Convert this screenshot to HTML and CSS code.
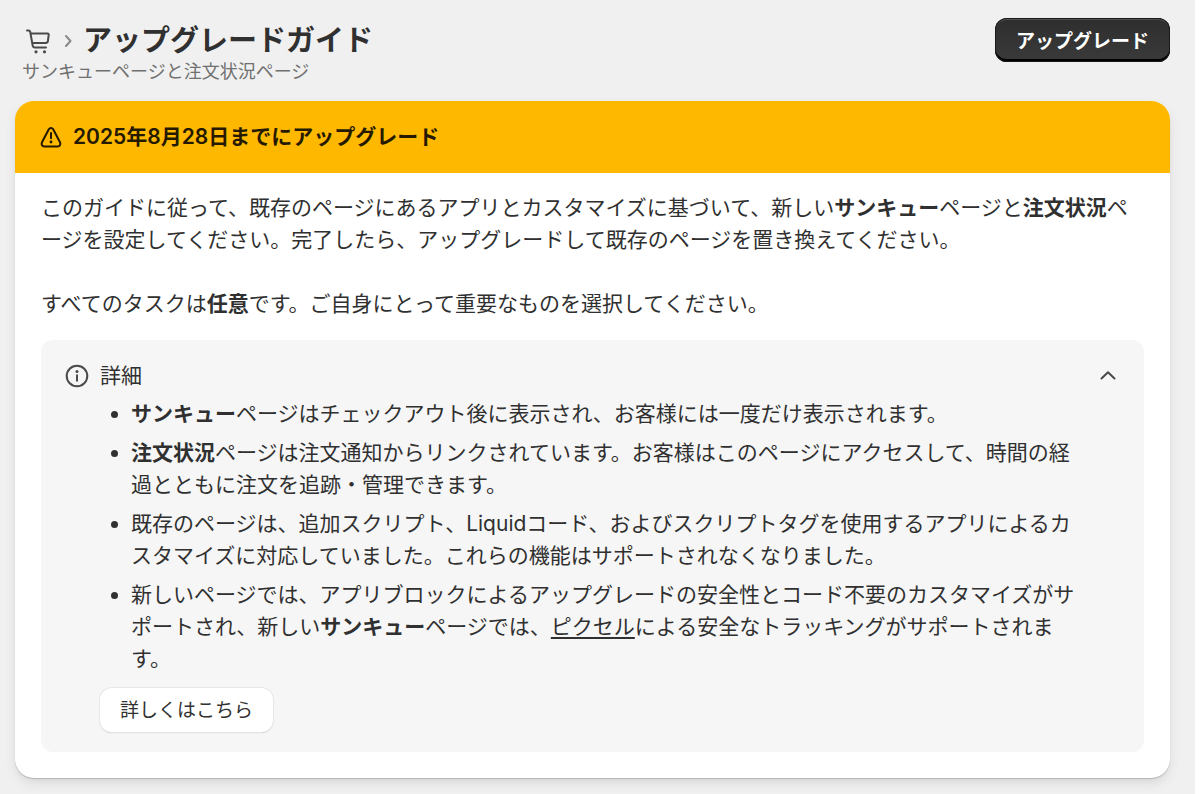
FILE: index.html
```
<!DOCTYPE html>
<html lang="ja">
<head>
    <meta charset="UTF-8">
    <meta name="viewport" content="width=device-width, initial-scale=1.0">
    <title>アップグレードガイド</title>
    <link rel="stylesheet" href="styles.css">
</head>
<body>
    <header class="page-header">
        <div>
            <div class="title-row">
                <svg class="cart-icon" viewBox="0 0 26 26" aria-hidden="true">
                    <path d="M2 2.5H3.6C4.5 2.5 5 3 5.2 3.8L7.7 17.8C7.9 18.8 8.5 19.4 9.5 19.4H21M5.6 5.5H22.6C23.4 5.5 23.8 6 23.7 6.8L22.9 13C22.7 14.2 22 14.9 20.8 14.9H7.4"/>
                    <circle cx="11" cy="23.8" r="1.6"/>
                    <circle cx="19.5" cy="23.8" r="1.6"/>
                </svg>
                <svg class="crumb-icon" viewBox="0 0 8 12" aria-hidden="true">
                    <path d="M2 1L6.5 6L2 11"/>
                </svg>
                <h1>アップグレードガイド</h1>
            </div>
            <p class="subtitle">サンキューページと注文状況ページ</p>
        </div>
        <button type="button" class="btn btn-primary">アップグレード</button>
    </header>

    <main class="card">
        <div class="banner">
            <svg class="icon" viewBox="0 0 24 24" aria-hidden="true">
                <path d="M9.8 4.2C10.8 2.5 13.2 2.5 14.2 4.2L21 17.3C22 19.4 20.8 21.4 18.7 21.4H5.3C3.2 21.4 2 19.4 3 17.3ZM12 8V13.2"/>
                <circle cx="12" cy="17" r="1.4"/>
            </svg>
            <h2>2025年8月28日までにアップグレード</h2>
        </div>

        <div class="card-body">
            <p>このガイドに従って、既存のページにあるアプリとカスタマイズに基づいて、新しい<strong>サンキュー</strong>ページと<strong>注文状況</strong>ページを設定してください。完了したら、アップグレードして既存のページを置き換えてください。</p>
            <p>すべてのタスクは<strong>任意</strong>です。ご自身にとって重要なものを選択してください。</p>

            <section class="details">
                <button type="button" class="details-toggle" aria-expanded="true" aria-controls="details-content">
                    <svg class="icon" viewBox="0 0 24 24" aria-hidden="true">
                        <circle class="ring" cx="12" cy="12" r="10.3"/>
                        <path d="M12 11.2V16.8"/>
                        <circle cx="12" cy="7.4" r="1.5"/>
                    </svg>
                    <span>詳細</span>
                    <svg class="chevron" viewBox="0 0 18 12" aria-hidden="true">
                        <path d="M2.5 8.5L9 2.2L15.5 8.5"/>
                    </svg>
                </button>
                <div class="details-content" id="details-content">
                    <ul>
                        <li><strong>サンキュー</strong>ページはチェックアウト後に表示され、お客様には一度だけ表示されます。</li>
                        <li><strong>注文状況</strong>ページは注文通知からリンクされています。お客様はこのページにアクセスして、時間の経過とともに注文を追跡・管理できます。</li>
                        <li>既存のページは、追加スクリプト、Liquidコード、およびスクリプトタグを使用するアプリによるカスタマイズに対応していました。これらの機能はサポートされなくなりました。</li>
                        <li>新しいページでは、アプリブロックによるアップグレードの安全性とコード不要のカスタマイズがサポートされ、新しい<strong>サンキュー</strong>ページでは、<a href="#">ピクセル</a>による安全なトラッキングがサポートされます。</li>
                    </ul>
                    <button type="button" class="btn btn-secondary">詳しくはこちら</button>
                </div>
            </section>
        </div>
    </main>

    <script>
        const toggle = document.querySelector('.details-toggle');
        const content = document.getElementById('details-content');

        toggle.addEventListener('click', () => {
            content.hidden = !content.hidden;
            toggle.setAttribute('aria-expanded', String(!content.hidden));
        });
    </script>
</body>
</html>
```
FILE: styles.css
```
* {
    box-sizing: border-box;
}

html {
    background-color: #fff;
}

body {
    margin: 0 5px 0 0;
    padding: 18px 25px 16px 15px;
    background-color: #f0f0f0;
    color: #303030;
    font-family: Inter, "Noto Sans CJK JP", sans-serif;
    font-size: 21px;
    line-height: 32px;
}

h1,
h2,
p,
ul {
    margin: 0;
}

svg {
    flex-shrink: 0;
    fill: none;
    stroke: currentColor;
    stroke-width: 2;
    stroke-linecap: round;
    stroke-linejoin: round;
}

svg circle {
    fill: currentColor;
    stroke: none;
}

svg .ring {
    fill: none;
    stroke: currentColor;
}

.icon {
    width: 24px;
    height: 24px;
}

.page-header {
    display: flex;
    justify-content: space-between;
    align-items: flex-start;
    margin-bottom: 17px;
    padding-left: 7px;
}

.title-row {
    display: flex;
    align-items: center;
    padding: 4px 0 0 3px;
}

.title-row h1 {
    font-size: 29px;
    line-height: 38px;
}

.cart-icon {
    width: 26px;
    height: 26px;
    color: #4a4a4a;
}

.crumb-icon {
    width: 8px;
    height: 12px;
    margin: 0 11px 0 13px;
    color: #8a8a8a;
}

.subtitle {
    color: #707070;
    font-size: 18px;
    line-height: 24px;
}

.btn {
    height: 44px;
    padding: 0 20px 4px;
    border: none;
    border-radius: 12px;
    font-family: inherit;
    font-size: 19px;
    cursor: pointer;
}

.btn-primary {
    padding: 0 21px 2px;
    background: linear-gradient(#2e2e2e, #3a3a3a);
    color: #fff;
    font-weight: bold;
    box-shadow: inset 0 0 0 1px #1a1a1a, inset 0 2px 0 #505050, inset 0 -3px 0 #000;
}

.btn-secondary {
    background-color: #fff;
    color: #303030;
    box-shadow: 0 0 0 1px #e6e6e6, 0 1px 1px #a8a8a8;
}

.card {
    border-radius: 19px;
    background-color: #fff;
    box-shadow: 0 1px 1px #b4b4b4, 0 6px 12px -2px #d4d4d4;
}

.banner {
    display: flex;
    align-items: center;
    gap: 10px;
    height: 72px;
    padding: 0 24px;
    border-radius: 19px 19px 0 0;
    background-color: #ffb800;
    color: #251a00;
}

.banner h2 {
    font-size: 21px;
    font-weight: 600;
}

.card-body {
    padding: 19px 26px 26px;
}

.card-body > p {
    margin-bottom: 32px;
}

.card-body > p + p {
    margin-bottom: 20px;
}

.details {
    padding: 20px 24px;
    border-radius: 12px;
    background-color: #f6f6f6;
}

.details-toggle {
    display: flex;
    align-items: center;
    gap: 11px;
    width: 100%;
    padding: 0;
    border: none;
    background: none;
    color: #303030;
    font: inherit;
    text-align: left;
    cursor: pointer;
}

.details-toggle svg {
    color: #4a4a4a;
}

.chevron {
    width: 18px;
    height: 12px;
    margin: 0 3px 0 auto;
}

.details-content {
    padding: 6px 30px 0 35px;
}

.details ul {
    margin-bottom: 13px;
    padding-left: 31px;
}

.details li {
    margin-bottom: 7px;
}

.details a {
    color: inherit;
    text-underline-offset: 3px;
}
```
